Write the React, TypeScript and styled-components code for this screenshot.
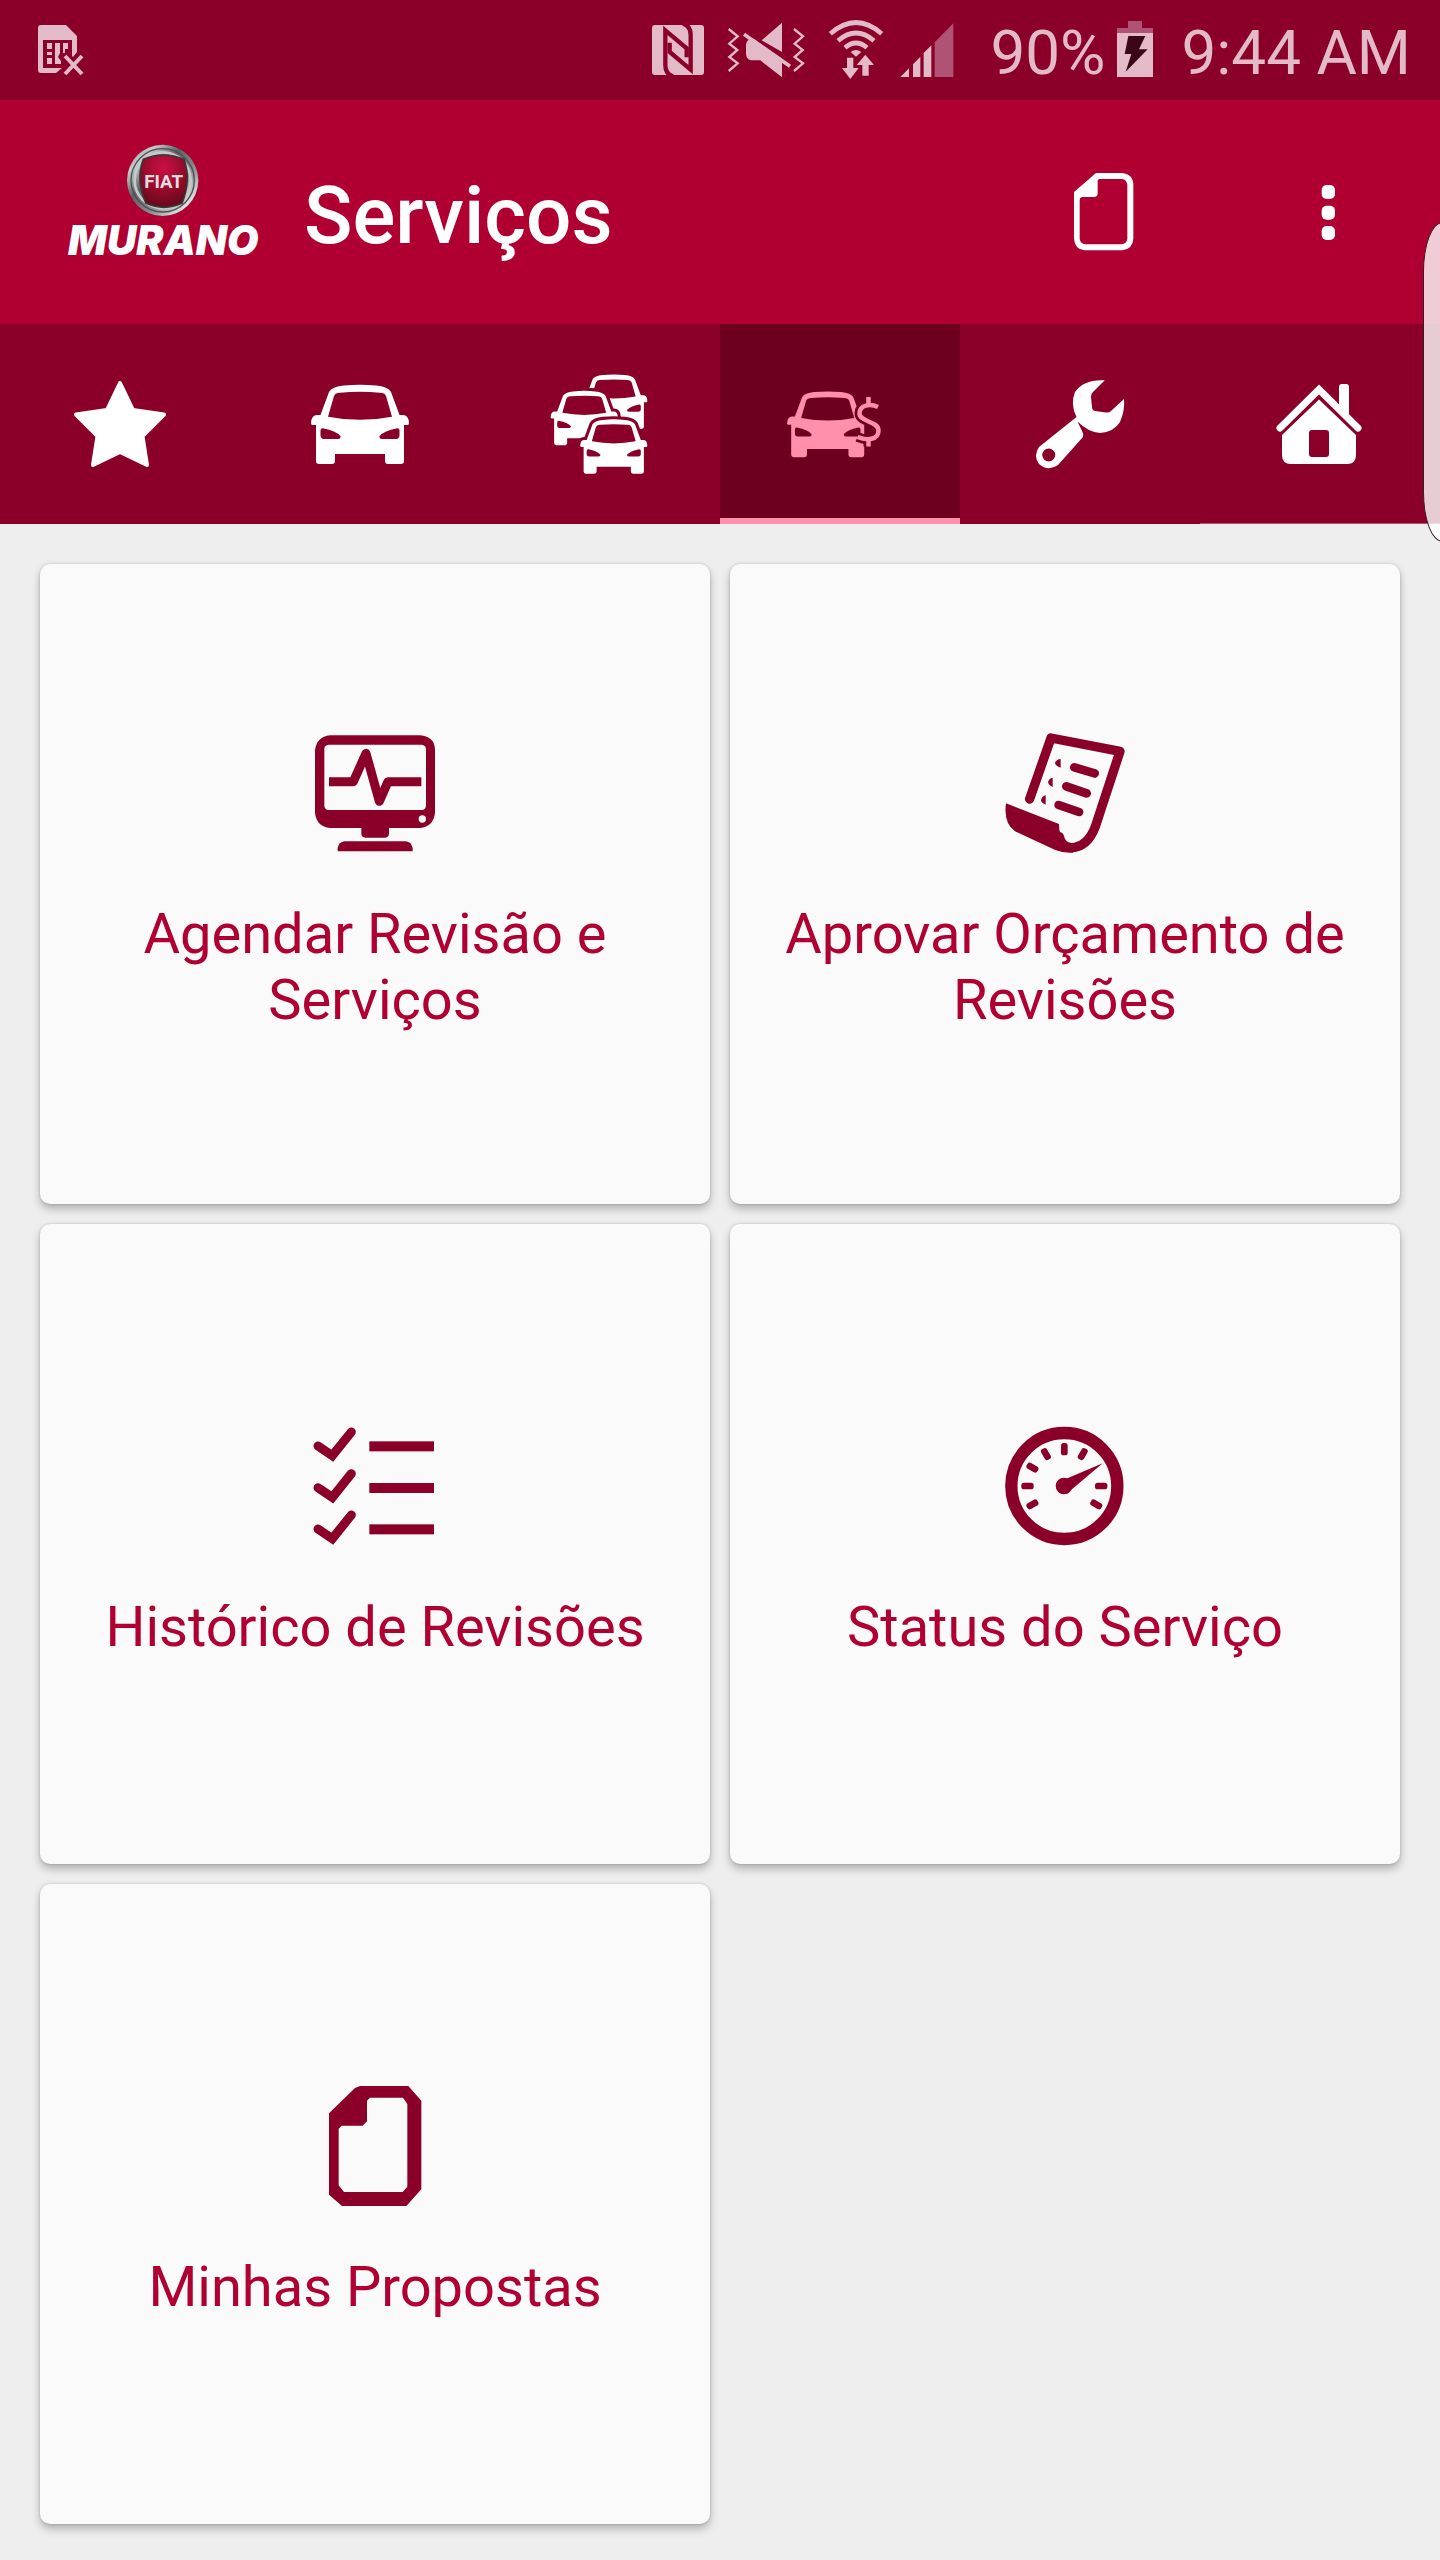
import React from "react";
import styled, { createGlobalStyle, ThemeProvider } from "styled-components";

const theme = {
  primary: "#b00032",
  dark: "#8b0029",
  darker: "#6c001e",
  accent: "#ff8fab",
  status: "#e2bac8",
  statusFaint: "#b05274",
  page: "#eeeeee",
  card: "#fafafa",
};

const GlobalStyle = createGlobalStyle`
  * { box-sizing: border-box; }
  body {
    margin: 0;
    background: ${theme.page};
    font-family: Roboto, "Noto Sans", sans-serif;
  }
  button { font: inherit; border: 0; padding: 0; background: none; cursor: pointer; }
  svg { display: block; overflow: visible; }
`;

const Screen = styled.div`
  position: relative;
  overflow: hidden;
  min-height: 100vh;
  background: ${(p) => p.theme.page};
`;

const StatusBar = styled.div`
  display: flex;
  align-items: center;
  justify-content: space-between;
  height: 100px;
  padding: 0 29px 0 38px;
  background: ${(p) => p.theme.dark};
  color: ${(p) => p.theme.status};
`;

const StatusGroup = styled.div`
  display: flex;
  align-items: center;
  gap: ${(p: { $gap: number }) => p.$gap}px;
`;

const StatusIcon = styled.svg`
  flex: none;
  height: 60px;
  fill: currentColor;
`;

const StatusText = styled.span`
  padding-top: 6px;
  font-size: 62px;
  font-weight: 400;
  line-height: 76px;
  white-space: nowrap;
`;

const AppBar = styled.header`
  display: flex;
  align-items: center;
  height: 224px;
  padding: 0 64px 0 60px;
  background: ${(p) => p.theme.primary};
  color: #fff;
`;

const Logo = styled.svg`
  flex: none;
  width: 210px;
  height: 140px;
`;

const Title = styled.h1`
  flex: 1;
  margin: 0;
  padding: 8px 0 0 34px;
  font-size: 80px;
  font-weight: 500;
  line-height: 94px;
`;

const Actions = styled.div`
  display: flex;
  gap: 128px;
`;

const ActionButton = styled.button`
  width: 96px;
  height: 96px;
  color: #fff;
`;

const Tabs = styled.nav`
  display: grid;
  grid-template-columns: repeat(6, 1fr);
  height: 200px;
  background: ${(p) => p.theme.dark};
`;

const Tab = styled.button<{ $active: boolean }>`
  --tab: ${(p) => (p.$active ? p.theme.darker : p.theme.dark)};
  display: grid;
  place-items: center;
  background: var(--tab);
  color: ${(p) => (p.$active ? p.theme.accent : "#fff")};
  box-shadow: ${(p) => (p.$active ? `inset 0 -6px ${p.theme.accent}` : "none")};

  &:last-child {
    box-shadow: inset 0 -1px ${(p) => p.theme.statusFaint};
  }
`;

const TabIcon = styled.svg`
  width: 100px;
  height: 100px;
  fill: currentColor;
`;

const Grid = styled.main`
  display: grid;
  grid-template-columns: repeat(2, 1fr);
  gap: 20px;
  padding: 40px 40px 36px;
`;

const Card = styled.button`
  display: flex;
  flex-direction: column;
  align-items: center;
  justify-content: center;
  gap: 48px;
  height: 640px;
  padding: 0 40px 2px;
  border-radius: 10px;
  background: ${(p) => p.theme.card};
  box-shadow: 0 5px 8px rgba(0, 0, 0, 0.25), 0 0 3px rgba(0, 0, 0, 0.18);
  color: ${(p) => p.theme.primary};
`;

const CardIcon = styled.svg`
  width: 120px;
  height: 120px;
  color: ${(p) => p.theme.dark};
  fill: currentColor;
`;

const CardLabel = styled.span`
  font-size: 56px;
  font-weight: 400;
  line-height: 66px;
`;

const EdgeHandle = styled.div`
  position: absolute;
  top: 222px;
  right: -22px;
  width: 39px;
  height: 320px;
  border: 1px solid #3a1a24;
  border-radius: 22px / 56px;
  background: rgba(255, 255, 255, 0.8);
`;

/* ---------- status icons ---------- */

const SimIcon = () => (
  <StatusIcon viewBox="0 0 48 60" width="48" aria-label="Sem chip">
    <path
      fillRule="evenodd"
      d="M3 5H28L39 16V32L35 37L34 36V20H5V48H24L18 53H3Q0 53 0 50V8Q0 5 3 5Z"
    />
    <path d="M9 23h5v6h-5zM9 32h5v3h-5zM9 38h5v6h-5zM17 23h5v10l-2 4l3 4v3h-6zM25 23h5v6h-3v4h-2z" />
    <path d="M27 36L44 54M44 36L27 54" fill="none" stroke="currentColor" strokeWidth="4" />
  </StatusIcon>
);

const NfcIcon = () => (
  <StatusIcon viewBox="33 60 156 180" width="52" aria-label="NFC">
    <rect x="33" y="75" width="156" height="150" rx="9" />
    <g fill="none" stroke={theme.dark} strokeWidth="13">
      <path d="M96 229Q73 222 73 196V91L137 145V172" />
      <path d="M126 71Q149 78 149 104V209L86 156V128" />
    </g>
  </StatusIcon>
);

const MuteIcon = () => (
  <StatusIcon viewBox="261 60 228 180" width="76" aria-label="Vibrar">
    <path d="M423 68V156L362 121ZM328 118H340L423 176V232L358 181H330Q315 178 315 160V134Q317 120 328 118Z" />
    <path d="M309 103L447 199" stroke="currentColor" strokeWidth="11" />
    <g fill="none" stroke="currentColor" strokeWidth="7">
      <path d="M263 87L290 109L265 131L289 150L265 171L290 190L263 213" />
      <path d="M459 87L486 109L461 131L485 150L461 171L486 190L459 213" />
    </g>
  </StatusIcon>
);

const WifiIcon = () => (
  <StatusIcon viewBox="564 60 168 180" width="56" aria-label="Wi-Fi">
    <g fill="none" stroke="currentColor" strokeWidth="14">
      <path d="M571 101Q648 34 725 101" />
      <path d="M594 122Q648 76 702 122" />
      <path d="M615 143Q648 115 681 143" />
    </g>
    <path d="M632 156Q648 144 664 156L648 170Z" />
    <path d="M621 173h19v31h16l-25 33l-25-33h15zM667 227v-32h-17l26-31l26 31h-16v32z" />
  </StatusIcon>
);

const SignalIcon = () => (
  <StatusIcon viewBox="776 60 162 180" width="54" aria-label="Sinal">
    <path d="M777 231L803 205V231ZM815 193L837 170V231H815ZM847 159L870 136V231H847Z" />
    <path d="M880 127L936 70V231H880Z" fill={theme.statusFaint} />
  </StatusIcon>
);

const BatteryIcon = () => (
  <StatusIcon viewBox="354 60 108 180" width="36" aria-label="Bateria carregando">
    <path d="M387 63H429V84H462V99H354V84H387Z" fill={theme.statusFaint} />
    <path d="M354 99H462V231H354Z" />
    <path d="M388 108H439L420 148H446L380 215L397 162H377Z" fill="#3a0618" />
  </StatusIcon>
);

/* ---------- brand ---------- */

const BrandLogo = () => (
  <Logo viewBox="30 36 630 420" role="img" aria-label="Fiat Murano">
    <defs>
      <linearGradient id="chrome" x1="0" y1="0" x2="1" y2="1">
        <stop offset="0" stopColor="#6d7375" />
        <stop offset="0.2" stopColor="#c9cdce" />
        <stop offset="0.4" stopColor="#5c6264" />
        <stop offset="0.65" stopColor="#8d9395" />
        <stop offset="0.85" stopColor="#e2e5e5" />
        <stop offset="1" stopColor="#747a7c" />
      </linearGradient>
      <radialGradient id="badge" cx="0.5" cy="0.25" r="0.8">
        <stop offset="0" stopColor="#cc1044" />
        <stop offset="0.6" stopColor="#8f0a28" />
        <stop offset="1" stopColor="#5c0a18" />
      </radialGradient>
    </defs>
    <circle cx="338" cy="151" r="107" fill="url(#chrome)" />
    <circle cx="338" cy="151" r="95" fill="none" stroke="#4b5154" strokeWidth="4" />
    <circle cx="338" cy="151" r="84" fill="none" stroke="#c6cacb" strokeWidth="8" />
    <path
      d="M280 88Q340 62 402 88Q424 150 396 220Q342 244 288 220Q256 150 280 88Z"
      fill="url(#badge)"
      stroke="#3c3438"
      strokeWidth="5"
    />
    <text
      x="341"
      y="175"
      textAnchor="middle"
      fontFamily="Roboto, sans-serif"
      fontSize="56"
      fontWeight="700"
      fill="#e4dcdf"
    >
      FIAT
    </text>
    <text
      x="340"
      y="375"
      textAnchor="middle"
      fontFamily="Inter, Roboto, sans-serif"
      fontSize="122"
      fontWeight="900"
      fontStyle="italic"
      fill="#fff"
    >
      MURANO
    </text>
  </Logo>
);

/* ---------- tab icons ---------- */

const CAR_BODY =
  "M6 51H2.500Q1 51 1 49Q1.500 41 7 41H10.500L19 18Q22 12.500 34 11.500Q50 10 66 11.500Q78 12.500 81 18L89.500 41H93Q98.500 41 99 49Q99 51 97.500 51H94V87Q94 90 91 90H78Q75 90 75 87V80H25V87Q25 90 22 90H9Q6 90 6 87Z";
const CAR_HOLES =
  "M18 42.700L24 22Q25.500 18.700 30 18.700Q50 17 70 18.700Q74.500 18.700 76 22L82 42.700Q50 49 18 42.700Z" +
  "M13 54.300Q26 57 30.500 62Q31 65 28 65H14Q10.500 65 10.500 61V57Q10.500 54 13 54.300Z" +
  "M87 54.300Q74 57 69.500 62Q69 65 72 65H86Q89.500 65 89.500 61V57Q89.500 54 87 54.300Z";

const CarShape = ({ halo = false }: { halo?: boolean }) => (
  <>
    {halo && <path d={CAR_BODY} fill="var(--tab)" stroke="var(--tab)" strokeWidth="9" />}
    <path d={CAR_BODY + CAR_HOLES} fillRule="evenodd" />
  </>
);

const StarIcon = () => (
  <path
    d="M50 9L63 36L94 40.500L72.500 62L77 91L50 78L23 91L27.500 62L6 40.500L37 36Z"
    stroke="currentColor"
    strokeWidth="4"
    strokeLinejoin="round"
  />
);

const CarsIcon = () => (
  <>
    <g transform="translate(29.500 -6.800) scale(.685)">
      <CarShape />
    </g>
    <g transform="translate(0 9.500) scale(.685)">
      <CarShape halo />
    </g>
    <g transform="translate(29.500 38) scale(.685)">
      <CarShape halo />
    </g>
  </>
);

const DOLLAR =
  "M88 33C80 29 69.500 31 69.500 39.500C69.500 48 88.500 47 88.500 56.500C88.500 66 77 67 67.500 63M78.500 23V31M78.500 65V72.500";

const CarDollarIcon = () => (
  <>
    <g transform="translate(-3.800 8.500) scale(.83)">
      <CarShape />
    </g>
    <path d={DOLLAR} fill="none" stroke="var(--tab)" strokeWidth="10" />
    <path d={DOLLAR} fill="none" stroke="currentColor" strokeWidth="4.500" />
  </>
);

const WrenchIcon = () => (
  <path
    fillRule="evenodd"
    d="M74.800 6.300Q54 5 45 18Q40 30 46.500 43L9 73Q3 82 9 90Q18 98 28 91L53 63Q54 60 52 57L47.500 47.500Q58 58 70 59Q84 58 90 48Q95 37 94 25L81 37Q79 39 76 38.500L65 37Q62 36 62 33L61 23Q61 21 62 19ZM18.700 74.500A6.500 6.500 0 1 0 18.700 87.500A6.500 6.500 0 1 0 18.700 74.500Z"
  />
);

const HouseIcon = () => (
  <>
    <path
      d="M10 54L49 15.500L88 54"
      fill="none"
      stroke="currentColor"
      strokeWidth="7"
      strokeLinecap="round"
    />
    <path d="M69 34V13Q69 10 72 10H76Q79 10 79 13V44Z" />
    <path
      fillRule="evenodd"
      d="M49 25.500L86 61V81Q86 90 77 90H21Q12 90 12 81V61ZM42 56Q39 56 39 59V80Q39 83 42 83H56Q59 83 59 80V59Q59 56 56 56Z"
    />
  </>
);

/* ---------- card icons ---------- */

const MonitorIcon = () => (
  <CardIcon viewBox="75 69 360 360" aria-hidden="true">
    <path
      fillRule="evenodd"
      d="M120 76H390Q435 80 435 121V309Q430 350 390 354H297V372Q296 382 286 383H226Q215 382 214 372V354H120Q80 350 75 309V121Q80 80 120 76ZM116 104Q103 105 103 117V287Q104 299 116 300H395Q407 299 408 287V117Q407 105 395 104ZM397 316A11 11 0 1 0 397 338A11 11 0 1 0 397 316Z"
    />
    <path d="M143 424V414Q147 396 163 394H348Q364 396 368 414V424Z" />
    <path
      d="M117 215H190L228 130L268 274L294 215H394"
      fill="none"
      stroke="currentColor"
      strokeWidth="27"
      strokeLinejoin="round"
    />
  </CardIcon>
);

const InvoiceIcon = () => (
  <CardIcon viewBox="75 69 360 360" aria-hidden="true">
    <path
      d="M149 267L213 84L420 124L346 350Q322 413 272 413Q244 409 238 380"
      fill="none"
      stroke="currentColor"
      strokeWidth="28"
      strokeLinecap="round"
      strokeLinejoin="round"
    />
    <path d="M78 280L237 342Q236 378 258 397Q270 405 280 402V428Q250 430 226 420L105 364Q70 340 78 280Z" />
    <g stroke="currentColor" strokeWidth="26" strokeLinecap="round">
      <path d="M283 172L344 190M259 229L320 250M236 285L297 306" />
    </g>
    <path d="M242 147V173Q227 168 225 159Q229 148 242 147ZM218 203V231Q206 226 204 216Q207 205 218 203ZM197 256V284Q185 280 183 271Q186 258 197 256Z" />
  </CardIcon>
);

const ChecklistIcon = () => (
  <CardIcon viewBox="75 78 360 360" aria-hidden="true">
    {[0, 125, 249].map((dy) => (
      <g key={dy} transform={`translate(0 ${dy})`}>
        <path
          d="M84 138L127 167L184 96"
          fill="none"
          stroke="currentColor"
          strokeWidth="27"
          strokeLinecap="round"
        />
        <rect x="238" y="124" width="194" height="30" />
      </g>
    ))}
  </CardIcon>
);

const GaugeIcon = () => (
  <CardIcon viewBox="75 78 360 360" aria-hidden="true">
    <circle cx="253" cy="258" r="159" fill="none" stroke="currentColor" strokeWidth="37" />
    <circle cx="252" cy="258" r="25" />
    <path d="M250 240L368 190L266 276Z" />
    {[-120, -90, -60, -30, 0, 30, 90, 120].map((angle) => (
      <rect
        key={angle}
        x="243"
        y="129"
        width="20"
        height="37"
        rx="8"
        transform={`rotate(${angle} 253 258)`}
      />
    ))}
  </CardIcon>
);

const ProposalIcon = () => (
  <CardIcon viewBox="75 78 360 360" aria-hidden="true">
    <path
      fillRule="evenodd"
      d="M210 78H355L394 122V388L349 438H156L117 404V160L195 84ZM240 113L231 122V184L218 197H155L146 206V376L162 396H338L352 380V132L339 113Z"
    />
  </CardIcon>
);

/* ---------- screen ---------- */

const tabs = [
  { name: "Favoritos", icon: <StarIcon /> },
  { name: "Veículo", icon: <CarShape /> },
  { name: "Veículos", icon: <CarsIcon /> },
  { name: "Serviços", icon: <CarDollarIcon />, active: true },
  { name: "Oficina", icon: <WrenchIcon /> },
  { name: "Concessionária", icon: <HouseIcon /> },
];

const services = [
  { label: "Agendar Revisão e Serviços", icon: <MonitorIcon /> },
  { label: "Aprovar Orçamento de Revisões", icon: <InvoiceIcon /> },
  { label: "Histórico de Revisões", icon: <ChecklistIcon /> },
  { label: "Status do Serviço", icon: <GaugeIcon /> },
  { label: "Minhas Propostas", icon: <ProposalIcon /> },
];

export default function App() {
  return (
    <ThemeProvider theme={theme}>
      <GlobalStyle />
      <Screen>
        <StatusBar>
          <SimIcon />
          <StatusGroup $gap={28}>
            <StatusGroup $gap={36}>
              <StatusGroup $gap={16}>
                <StatusGroup $gap={24}>
                  <NfcIcon />
                  <MuteIcon />
                  <WifiIcon />
                </StatusGroup>
                <SignalIcon />
              </StatusGroup>
              <StatusGroup $gap={12}>
                <StatusText>90%</StatusText>
                <BatteryIcon />
              </StatusGroup>
            </StatusGroup>
            <StatusText>9:44 AM</StatusText>
          </StatusGroup>
        </StatusBar>
        <AppBar>
          <BrandLogo />
          <Title>Serviços</Title>
          <Actions>
            <ActionButton aria-label="Propostas">
              <svg viewBox="168 492 288 288" width="96" height="96" aria-hidden="true">
                <path
                  fill="currentColor"
                  fillRule="evenodd"
                  d="M288 519H366Q400 522 400 556V716Q398 748 366 751H254Q224 748 222 716V576ZM298 537Q293 538 293 543V583Q292 590 285 591H246Q239 592 239 600V716Q241 731 256 733H364Q380 731 382 716V554Q380 539 366 537Z"
                />
              </svg>
            </ActionButton>
            <ActionButton aria-label="Mais opções">
              <svg viewBox="840 492 288 288" width="96" height="96" aria-hidden="true">
                <g fill="currentColor">
                  <rect x="965" y="555" width="40" height="42" rx="15" />
                  <rect x="965" y="617" width="40" height="42" rx="15" />
                  <rect x="965" y="678" width="40" height="42" rx="15" />
                </g>
              </svg>
            </ActionButton>
          </Actions>
        </AppBar>
        <Tabs aria-label="Seções">
          {tabs.map((tab) => (
            <Tab key={tab.name} $active={!!tab.active} aria-label={tab.name}>
              <TabIcon viewBox="0 0 100 100" aria-hidden="true">
                {tab.icon}
              </TabIcon>
            </Tab>
          ))}
        </Tabs>
        <Grid>
          {services.map((service) => (
            <Card key={service.label}>
              {service.icon}
              <CardLabel>{service.label}</CardLabel>
            </Card>
          ))}
        </Grid>
        <EdgeHandle />
      </Screen>
    </ThemeProvider>
  );
}
